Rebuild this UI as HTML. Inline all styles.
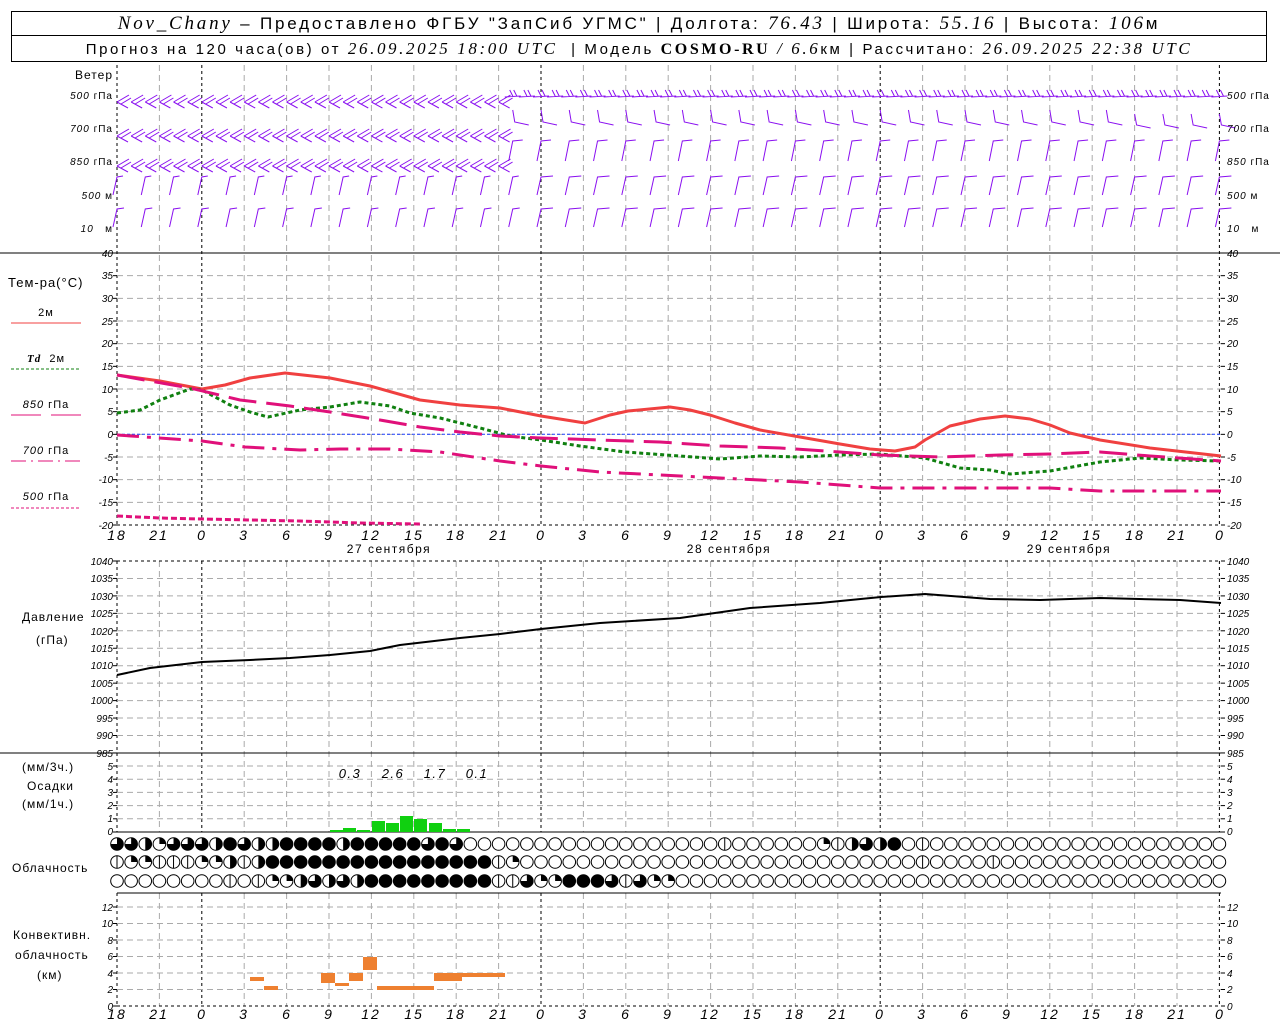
<!DOCTYPE html>
<html><head><meta charset="utf-8"><style>
body{margin:0;background:#fff;width:1280px;height:1024px;overflow:hidden;font-family:"Liberation Sans","DejaVu Sans",sans-serif}
svg{position:absolute;left:0;top:0}
.h{position:absolute;left:11px;width:1254px;border:1px solid #000;text-align:center;white-space:nowrap;color:#000}
.i{font-style:italic;font-family:"Liberation Serif",serif}
.l{font-size:11px;fill:#000;letter-spacing:1px}
.ax{font-size:10px;font-style:italic;fill:#000}
.axl{text-anchor:end}
.t{font-size:14px;font-style:italic;text-anchor:middle;fill:#000;letter-spacing:2px}
</style></head><body>
<div class="h" style="top:11px;height:23px;line-height:24px;font-size:17px;letter-spacing:2.8px"><span class="i" style="font-size:19px">Nov_Chany</span> – Предоставлено ФГБУ "ЗапСиб УГМС" | Долгота: <span class="i" style="font-size:19px">76.43</span> | Широта: <span class="i" style="font-size:19px">55.16</span> | Высота: <span class="i" style="font-size:19px">106</span>м</div>
<div class="h" style="top:35px;height:25px;line-height:26px;font-size:15px;letter-spacing:2.6px">Прогноз на 120 часа(ов) от <span class="i" style="font-size:17px">26.09.2025 18:00 UTC</span> &nbsp;| Модель <b style="font-family:'Liberation Serif',serif;font-size:16px">COSMO-RU</b> <span class="i" style="font-size:17px">/ 6.6</span>км | Рассчитано: <span class="i" style="font-size:17px">26.09.2025 22:38 UTC</span></div>
<svg id="s" width="1280" height="1024" xmlns="http://www.w3.org/2000/svg">
<g id="grid"></g><g id="dat"></g>
<g class="l">
<text x="113" y="79" text-anchor="end" font-size="12">Ветер</text>
<g font-size="10" text-anchor="end"><text x="113" y="99"><tspan font-style="italic">500</tspan> гПа</text><text x="113" y="132"><tspan font-style="italic">700</tspan> гПа</text><text x="113" y="165"><tspan font-style="italic">850</tspan> гПа</text><text x="113" y="199"><tspan font-style="italic">500</tspan> м</text><text x="113" y="232"><tspan font-style="italic">10</tspan> &#160;&#160;м</text></g>
<g font-size="10"><text x="1227" y="99"><tspan font-style="italic">500</tspan> гПа</text><text x="1227" y="132"><tspan font-style="italic">700</tspan> гПа</text><text x="1227" y="165"><tspan font-style="italic">850</tspan> гПа</text><text x="1227" y="199"><tspan font-style="italic">500</tspan> м</text><text x="1227" y="232"><tspan font-style="italic">10</tspan> &#160;&#160;м</text></g>
<text x="8" y="287" font-size="13">Тем-ра(°C)</text>
<text x="46" y="316" text-anchor="middle">2м</text>
<text x="46" y="362" text-anchor="middle"><tspan font-style="italic" font-weight="bold" font-family="Liberation Serif">Td</tspan> &#160;2м</text>
<text x="46" y="408" text-anchor="middle"><tspan font-style="italic">850</tspan> гПа</text>
<text x="46" y="454" text-anchor="middle"><tspan font-style="italic">700</tspan> гПа</text>
<text x="46" y="500" text-anchor="middle"><tspan font-style="italic">500</tspan> гПа</text>
<text x="22" y="621" font-size="12">Давление</text>
<text x="36" y="644" font-size="12">(гПа)</text>
<text x="22" y="771" font-size="12">(мм/3ч.)</text>
<text x="27" y="790" font-size="12">Осадки</text>
<text x="22" y="808" font-size="12">(мм/1ч.)</text>
<text x="12" y="872" font-size="12">Облачность</text>
<text x="13" y="939" font-size="12">Конвективн.</text>
<text x="15" y="959" font-size="12">облачность</text>
<text x="37" y="979" font-size="12">(км)</text>
</g>
<g class="ax axl">
<text x="113" y="257">40</text><text x="113" y="279">35</text><text x="113" y="302">30</text><text x="113" y="325">25</text><text x="113" y="347">20</text><text x="113" y="370">15</text><text x="113" y="393">10</text><text x="113" y="415">5</text><text x="113" y="438">0</text><text x="113" y="461">-5</text><text x="113" y="483">-10</text><text x="113" y="506">-15</text><text x="113" y="529">-20</text>
<text x="113" y="565">1040</text><text x="113" y="582">1035</text><text x="113" y="600">1030</text><text x="113" y="617">1025</text><text x="113" y="635">1020</text><text x="113" y="652">1015</text><text x="113" y="669">1010</text><text x="113" y="687">1005</text><text x="113" y="704">1000</text><text x="113" y="722">995</text><text x="113" y="739">990</text><text x="113" y="757">985</text>
<text x="113" y="770">5</text><text x="113" y="783">4</text><text x="113" y="796">3</text><text x="113" y="809">2</text><text x="113" y="822">1</text><text x="113" y="835">0</text>
<text x="113" y="911">12</text><text x="113" y="927">10</text><text x="113" y="944">8</text><text x="113" y="960">6</text><text x="113" y="977">4</text><text x="113" y="993">2</text><text x="113" y="1010">0</text>
</g>
<g class="ax">
<text x="1227" y="257">40</text><text x="1227" y="279">35</text><text x="1227" y="302">30</text><text x="1227" y="325">25</text><text x="1227" y="347">20</text><text x="1227" y="370">15</text><text x="1227" y="393">10</text><text x="1227" y="415">5</text><text x="1227" y="438">0</text><text x="1227" y="461">-5</text><text x="1227" y="483">-10</text><text x="1227" y="506">-15</text><text x="1227" y="529">-20</text>
<text x="1227" y="565">1040</text><text x="1227" y="582">1035</text><text x="1227" y="600">1030</text><text x="1227" y="617">1025</text><text x="1227" y="635">1020</text><text x="1227" y="652">1015</text><text x="1227" y="669">1010</text><text x="1227" y="687">1005</text><text x="1227" y="704">1000</text><text x="1227" y="722">995</text><text x="1227" y="739">990</text><text x="1227" y="757">985</text>
<text x="1227" y="770">5</text><text x="1227" y="783">4</text><text x="1227" y="796">3</text><text x="1227" y="809">2</text><text x="1227" y="822">1</text><text x="1227" y="835">0</text>
<text x="1227" y="911">12</text><text x="1227" y="927">10</text><text x="1227" y="944">8</text><text x="1227" y="960">6</text><text x="1227" y="977">4</text><text x="1227" y="993">2</text><text x="1227" y="1010">0</text>
</g>
<g class="t">
<text x="117" y="540">18</text><text x="159" y="540">21</text><text x="202" y="540">0</text><text x="244" y="540">3</text><text x="287" y="540">6</text><text x="329" y="540">9</text><text x="371" y="540">12</text><text x="414" y="540">15</text><text x="456" y="540">18</text><text x="499" y="540">21</text><text x="541" y="540">0</text><text x="583" y="540">3</text><text x="626" y="540">6</text><text x="668" y="540">9</text><text x="710" y="540">12</text><text x="753" y="540">15</text><text x="795" y="540">18</text><text x="838" y="540">21</text><text x="880" y="540">0</text><text x="922" y="540">3</text><text x="965" y="540">6</text><text x="1007" y="540">9</text><text x="1050" y="540">12</text><text x="1092" y="540">15</text><text x="1135" y="540">18</text><text x="1177" y="540">21</text><text x="1220" y="540">0</text>
<text x="117" y="1019">18</text><text x="159" y="1019">21</text><text x="202" y="1019">0</text><text x="244" y="1019">3</text><text x="287" y="1019">6</text><text x="329" y="1019">9</text><text x="371" y="1019">12</text><text x="414" y="1019">15</text><text x="456" y="1019">18</text><text x="499" y="1019">21</text><text x="541" y="1019">0</text><text x="583" y="1019">3</text><text x="626" y="1019">6</text><text x="668" y="1019">9</text><text x="710" y="1019">12</text><text x="753" y="1019">15</text><text x="795" y="1019">18</text><text x="838" y="1019">21</text><text x="880" y="1019">0</text><text x="922" y="1019">3</text><text x="965" y="1019">6</text><text x="1007" y="1019">9</text><text x="1050" y="1019">12</text><text x="1092" y="1019">15</text><text x="1135" y="1019">18</text><text x="1177" y="1019">21</text><text x="1220" y="1019">0</text>
</g>
<g font-size="12" text-anchor="middle" fill="#000" letter-spacing="1.5"><text x="389" y="553">27 сентября</text><text x="729" y="553">28 сентября</text><text x="1069" y="553">29 сентября</text></g>
<g font-size="13" font-style="italic" text-anchor="middle" fill="#000" letter-spacing="1.5"><text x="350" y="778">0.3</text><text x="393" y="778">2.6</text><text x="435" y="778">1.7</text><text x="477" y="778">0.1</text></g>
</svg>
<script>
var NS="http://www.w3.org/2000/svg",G=document.getElementById('grid'),D=document.getElementById('dat');
function el(p,t,a){var e=document.createElementNS(NS,t);for(var k in a)e.setAttribute(k,a[k]);p.appendChild(e);return e}
function X(h){return 117+h*14.1333}
for(var k=0;k<=26;k++){var x=X(k*3),z=(k%8==2)||k==0||k==26;
 var st=z?'#000':'#aaa',da=z?'3,3':'6,4';
 [[65,525],[561,832],[893,1006]].forEach(function(r){el(G,'line',{x1:x,y1:r[0],x2:x,y2:r[1],stroke:st,'stroke-dasharray':da,'stroke-width':1})});}
function hg(y){el(G,'line',{x1:117,y1:y,x2:1221,y2:y,stroke:'#aaa','stroke-dasharray':'6,4'})}
for(var i=1;i<12;i++)hg(253+i*22.667);
for(var i=1;i<11;i++)hg(561+i*17.45);
for(var i=1;i<6;i++)hg(832-i*13.2);
for(var i=1;i<7;i++)hg(1006-i*16.5);
[[253,'none'],[525,'3,3'],[561,'3,3'],[753,'none'],[832,'none'],[893,'none'],[1006,'3,3']].forEach(function(r){el(G,'line',{x1:117,y1:r[0],x2:1221,y2:r[0],stroke:'#000','stroke-dasharray':r[1]})});
el(G,'line',{x1:0,y1:253,x2:1280,y2:253,stroke:'#000'});
el(G,'line',{x1:0,y1:753,x2:117,y2:753,stroke:'#000'});
function tk(y){el(G,'line',{x1:113,y1:y,x2:117,y2:y,stroke:'#000'});el(G,'line',{x1:1221,y1:y,x2:1225,y2:y,stroke:'#000'})}
for(var i=0;i<=12;i++)tk(253+i*22.667);for(var i=0;i<=11;i++)tk(561+i*17.45);for(var i=0;i<=5;i++)tk(832-i*13.2);for(var i=0;i<=6;i++)tk(1006-i*16.5);
el(G,'line',{x1:117,y1:434.3,x2:1221,y2:434.3,stroke:'#2040ff','stroke-dasharray':'3,2'});
el(D,'line',{x1:11,y1:323,x2:81,y2:323,stroke:'#f04040','stroke-width':1});
el(D,'line',{x1:11,y1:369,x2:79,y2:369,stroke:'#108010','stroke-dasharray':'3,2'});
el(D,'line',{x1:11,y1:415,x2:81,y2:415,stroke:'#e0107a','stroke-dasharray':'30,10'});
el(D,'line',{x1:11,y1:461,x2:81,y2:461,stroke:'#e0107a','stroke-dasharray':'15,5,2,5'});
el(D,'line',{x1:11,y1:508,x2:79,y2:508,stroke:'#e0107a','stroke-dasharray':'3,2'});
function pl(pts,c,w,da){el(D,'polyline',{points:pts,fill:'none',stroke:c,'stroke-width':w,'stroke-dasharray':da||'none','stroke-linejoin':'round'})}
pl("117,375 160,381 202,389 225,385 250,378 285,373 330,378 370,386 420,400 460,405 500,408 541,416 585,423 610,415 628,411 670,407 690,410 710,415 735,423 760,430 800,437 840,444 870,449 895,451 915,447 925,440 950,426 980,419 1005,416 1030,419 1050,425 1070,433 1100,440 1150,448 1221,456","#f04040",3);
pl("117,413 140,410 160,400 190,389 202,390 230,405 250,412 268,417 300,410 330,407 360,402 390,406 410,413 440,418 480,428 510,436 541,440 580,446 625,452 680,456 720,459 760,456 800,457 840,455 880,454 925,458 960,468 990,470 1010,474 1050,471 1100,462 1140,458 1180,460 1221,461","#108010",3,"4,3");
pl("117,375 150,381 190,388 240,400 290,406 330,412 380,420 420,427 460,432 500,436 541,438 600,440 660,442 720,446 780,448 840,452 880,455 940,457 1000,455 1050,454 1100,452 1150,456 1221,461","#e0107a",3,"28,10");
pl("117,435 202,441 245,447 300,450 340,449 390,449 440,452 500,461 541,466 600,472 700,477 800,482 880,488 960,488 1050,488 1100,491 1221,491","#e0107a",3,"22,8,4,8");
pl("117,516 160,518 202,519 300,521 360,523 420,524","#e0107a",3,"6,3");
pl("117,675 150,668 202,662 250,660 290,658 330,655 370,651 400,645 460,638 500,634 541,629 600,623 680,618 750,608 820,603 881,597 925,594 990,599 1040,600 1100,598 1180,600 1221,603","#000",2);
[[330,2],[343,4],[357,2],[372,11],[386,9],[400,16],[414,13],[429,9],[443,3],[457,3]].forEach(function(b){el(D,'rect',{x:b[0],y:832-b[1],width:13,height:b[1],fill:'#10d010'})});
[[250,977,14,4],[264,986,14,4],[321,973,14,10],[335,983,14,3],[349,973,14,8],[363,957,14,13],[377,986,57,4],[434,973,28,8],[462,973,43,4]].forEach(function(b){el(D,'rect',{x:b[0],y:b[1],width:b[2],height:b[3],fill:'#ee8030'})});
var rows=[
"3321333243224444244444343"+"00000000000000000050000000"+"1342400000000000000000000000",
"5115551125244444444444444445100000000000000000000000000005000050000000000000000",
"0000000050511232324444444445531144435311000000000000000000000000000000000000000"];
rows[0]=(rows[0]+"000000000000000000000000000000000000000000000").slice(0,79);
rows[0]=rows[0].split('');[[43,'5'],[50,'1'],[51,'5'],[52,'2'],[53,'3'],[54,'2'],[57,'5']].forEach(function(p){rows[0][p[0]]=p[1]});rows[0]=rows[0].join('');
var ry=[844,862,881];
for(var r=0;r<3;r++)for(var i=0;i<79;i++){var c=rows[r][i]||'0',cx=X(i),cy=ry[r],R=6.3;
 el(D,'circle',{cx:cx,cy:cy,r:R,fill:c=='4'?'#000':'#fff',stroke:'#000','stroke-width':1});
 if(c=='1')el(D,'path',{d:'M'+cx+','+cy+'L'+cx+','+(cy-R)+'A'+R+','+R+' 0 0 1 '+(cx+R)+','+cy+'Z',fill:'#000'});
 if(c=='2')el(D,'path',{d:'M'+cx+','+(cy-R)+'A'+R+','+R+' 0 0 1 '+cx+','+(cy+R)+'Z',fill:'#000'});
 if(c=='3')el(D,'path',{d:'M'+cx+','+cy+'L'+cx+','+(cy-R)+'A'+R+','+R+' 0 1 1 '+(cx-R)+','+cy+'Z',fill:'#000'});
 if(c=='5')el(D,'line',{x1:cx,y1:cy-R,x2:cx,y2:cy+R,stroke:'#000'});
}
var P='#8a10f0',d='';
function zig(x,y){return 'M'+x+','+y+'L'+(x+12)+','+(y-7)+'M'+x+','+y+'L'+(x+11)+','+(y+6)+'M'+(x+4)+','+(y+2)+'L'+(x+14)+','+(y-4);}
function gam(x,y,L,f){return 'M'+(x-4)+','+y+'L'+x+','+(y-L)+'L'+(x+f)+','+(y-L-1);}
for(var i=0;i<79;i++){var x=X(i);
 if(i<28)d+=zig(x,102);else d+='M'+(x-8)+','+(97)+'L'+(x+8)+','+96+'M'+x+','+96+'L'+(x-3)+','+90+'M'+(x+4)+','+96+'L'+(x+1)+','+90;
 if(i<28)d+=zig(x,136);else if(i%2==0)d+='M'+x+','+(i<72?110:114)+'L'+(x+2)+','+(i<72?122:125)+'L'+(x+16)+','+(i<72?125:128);
 if(i<28)d+=zig(x,166);else if(i%2==0)d+=gam(x,161,20,10);
 if(i%2==0)d+=gam(x,195,18,i<30?6:12);
 if(i%2==0)d+=gam(x,227,18,i<30?7:12);
}
el(D,'path',{d:d,stroke:P,fill:'none','stroke-width':1});
</script>
</body></html>
